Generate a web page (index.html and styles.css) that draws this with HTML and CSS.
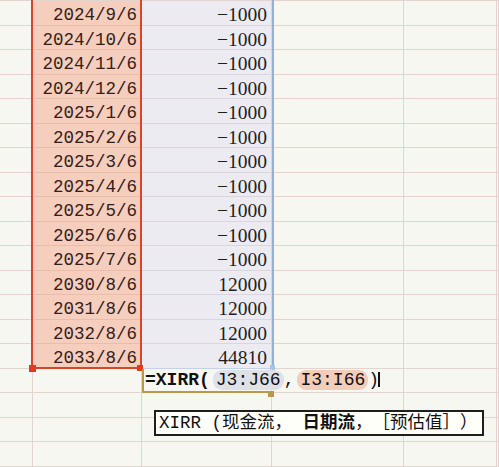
FILE: index.html
```html
<!DOCTYPE html>
<html>
<head>
<meta charset="utf-8">
<link rel="stylesheet" href="styles.css">
</head>
<body>
<div class="sheet">
  <div class="c"></div><div class="c d">2024/9/6</div><div class="c v">−1000</div><div class="c"></div><div class="c"></div><div class="c"></div>
  <div class="c"></div><div class="c d">2024/10/6</div><div class="c v">−1000</div><div class="c"></div><div class="c"></div><div class="c"></div>
  <div class="c"></div><div class="c d">2024/11/6</div><div class="c v">−1000</div><div class="c"></div><div class="c"></div><div class="c"></div>
  <div class="c"></div><div class="c d">2024/12/6</div><div class="c v">−1000</div><div class="c"></div><div class="c"></div><div class="c"></div>
  <div class="c"></div><div class="c d">2025/1/6</div><div class="c v">−1000</div><div class="c"></div><div class="c"></div><div class="c"></div>
  <div class="c"></div><div class="c d">2025/2/6</div><div class="c v">−1000</div><div class="c"></div><div class="c"></div><div class="c"></div>
  <div class="c"></div><div class="c d">2025/3/6</div><div class="c v">−1000</div><div class="c"></div><div class="c"></div><div class="c"></div>
  <div class="c"></div><div class="c d">2025/4/6</div><div class="c v">−1000</div><div class="c"></div><div class="c"></div><div class="c"></div>
  <div class="c"></div><div class="c d">2025/5/6</div><div class="c v">−1000</div><div class="c"></div><div class="c"></div><div class="c"></div>
  <div class="c"></div><div class="c d">2025/6/6</div><div class="c v">−1000</div><div class="c"></div><div class="c"></div><div class="c"></div>
  <div class="c"></div><div class="c d">2025/7/6</div><div class="c v">−1000</div><div class="c"></div><div class="c"></div><div class="c"></div>
  <div class="c"></div><div class="c d">2030/8/6</div><div class="c v">12000</div><div class="c"></div><div class="c"></div><div class="c"></div>
  <div class="c"></div><div class="c d">2031/8/6</div><div class="c v">12000</div><div class="c"></div><div class="c"></div><div class="c"></div>
  <div class="c"></div><div class="c d">2032/8/6</div><div class="c v">12000</div><div class="c"></div><div class="c"></div><div class="c"></div>
  <div class="c"></div><div class="c d">2033/8/6</div><div class="c v">44810</div><div class="c"></div><div class="c"></div><div class="c"></div>
  <div class="c"></div><div class="c"></div><div class="c f"><b>=XIRR(</b><span class="ref r1">J3:J66</span>,<span class="ref r2">I3:I66</span>)<span class="caret"></span></div><div class="c"></div><div class="c"></div><div class="c"></div>
  <div class="c"></div><div class="c"></div><div class="c"></div><div class="c"></div><div class="c"></div><div class="c"></div>
  <div class="c"></div><div class="c"></div><div class="c"></div><div class="c"></div><div class="c"></div><div class="c"></div>
  <div class="c"></div><div class="c"></div><div class="c"></div><div class="c"></div><div class="c"></div><div class="c"></div>

  <div class="sel-date"></div>
  <div class="sel-val"></div>
  <div class="handle h-red h1"></div>
  <div class="handle h-red h2"></div>
  <div class="handle h-blue h3"></div>
  <div class="handle h-gold h4"></div>
  <div class="tip">XIRR (现金流， <b>日期流</b>，［预估值］）</div>
</div>
</body>
</html>
```
FILE: styles.css
```css
html, body {
  margin: 0;
  padding: 0;
}
body {
  width: 499px;
  height: 467px;
  overflow: hidden;
  background: #f7f7f2;
  font-family: "Liberation Mono", "Noto Sans CJK SC", monospace;
  color: #1c1c1c;
}
.sheet {
  position: relative;
  display: grid;
  grid-template-columns: 33px 109px 130px 132px 93px 2px;
  grid-auto-rows: 24.5px;
  border-top: 1px solid #e4d4d0;
}
.c {
  box-sizing: border-box;
  border-right: 1px solid #e4d4d0;
  border-bottom: 1px solid #e4d4d0;
  white-space: nowrap;
}
.d {
  background: #f5cebd;
  border-bottom-color: #ecbcaa;
  text-align: right;
  padding-right: 4px;
  font-size: 17.5px;
  line-height: 28px;
  color: #34201a;
}
.v {
  background: #ecebf1;
  border-bottom-color: #dcd6dc;
  text-align: right;
  padding-right: 4px;
  font-family: "Liberation Serif", serif;
  font-size: 19.5px;
  line-height: 28px;
  color: #1e1e1e;
}
.f {
  position: relative;
  z-index: 2;
  border-left: 2px solid #b8994c;
  border-bottom: 2px solid #b8994c;
  padding-left: 1px;
  font-size: 18px;
  line-height: 23px;
  color: #111;
  overflow: visible;
}
.f b {
  font-weight: bold;
}
.ref {
  display: inline-block;
  border-radius: 9px;
  padding: 0 3px;
  line-height: 20px;
  margin-left: 3px;
}
.r1 {
  background: #dfe1e9;
}
.r2 {
  background: #f4ccba;
}
.caret {
  display: inline-block;
  width: 2px;
  height: 15px;
  background: #111;
  vertical-align: -2px;
  margin-left: -1px;
}
.sel-date {
  position: absolute;
  left: 31px;
  top: -6px;
  width: 111px;
  height: 374px;
  box-sizing: border-box;
  border: 2px solid #d9452a;
  pointer-events: none;
}
.sel-val {
  position: absolute;
  left: 142px;
  top: -6px;
  width: 132px;
  height: 374px;
  box-sizing: border-box;
  border-right: 2px solid #8fb2d9;
  border-bottom: 1px solid #c3d3e6;
}
.handle {
  position: absolute;
  width: 6px;
  height: 6px;
}
.h-red { background: #e23a1e; }
.h1 { left: 29px; top: 364px; width: 7px; height: 7px; }
.h2 { left: 137px; top: 364px; }
.h-blue { background: #a8c4e4; }
.h3 { left: 270px; top: 364px; width: 5px; height: 5px; }
.h-gold { background: #b8994c; }
.h4 { left: 268px; top: 390px; z-index: 3; }
.tip {
  position: absolute;
  left: 154px;
  top: 409px;
  width: 330px;
  height: 26px;
  box-sizing: border-box;
  border: 2px solid #1e1e1e;
  background: #fffffa;
  padding-left: 3px;
  font-size: 17.5px;
  line-height: 22px;
  color: #111;
  white-space: nowrap;
  text-spacing-trim: space-all;
  z-index: 4;
}
.tip b {
  font-weight: bold;
}
```
